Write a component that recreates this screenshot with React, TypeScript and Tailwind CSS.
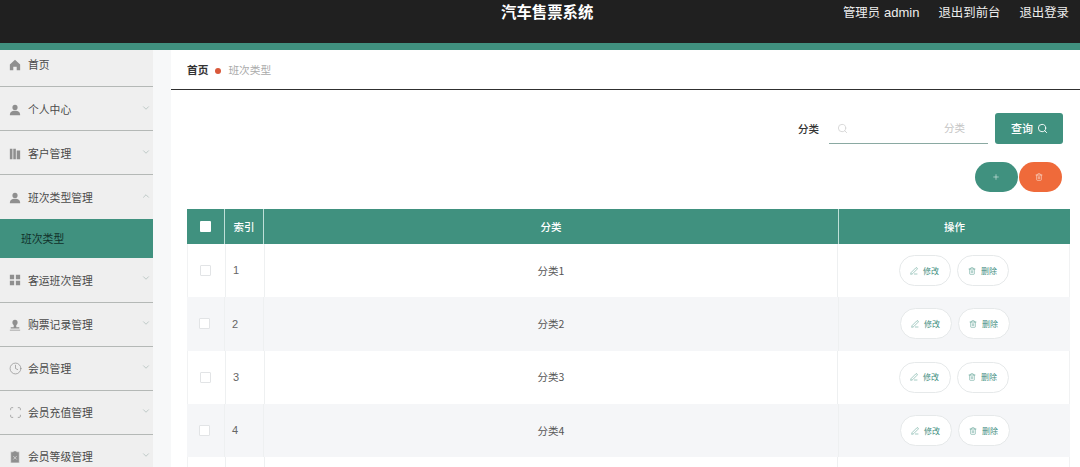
import React from "react";
import { ChevronDown, ChevronUp, Search, Plus, Trash2, Clock, Scan, PenLine } from "lucide-react";

const font = { fontFamily: '"Noto Sans CJK SC","Noto Sans",sans-serif' };

const Home = () => (
  <svg width="12" height="12" viewBox="0 0 14 14" fill="#8f8f8f"><path d="M7 1 1 6.500V13h4V9h4v4h4V6.500z" /></svg>
);
const User = () => (
  <svg width="12" height="12" viewBox="0 0 14 14" fill="#8f8f8f"><circle cx="7" cy="4" r="3" /><path d="M1 13c0-3.500 2.500-5 6-5s6 1.500 6 5z" /></svg>
);
const Bars = () => (
  <svg width="12" height="12" viewBox="0 0 14 14" fill="#8f8f8f"><path d="M1 1h3v12H1zM5 1h3v12H5zM9 3h4v10H9z" /></svg>
);
const Grid = () => (
  <svg width="12" height="12" viewBox="0 0 14 14" fill="#8f8f8f"><path d="M1 1h5v5H1zM8 1h5v5H8zM1 8h5v5H1zM8 8h5v5H8z" /></svg>
);
const Stamp = () => (
  <svg width="12" height="12" viewBox="0 0 14 14" fill="#8f8f8f"><circle cx="7" cy="4" r="3" /><path d="M5.500 6h3v4h-3zM2 9.500h10V11H2zM1 12.500h12v1H1z" /></svg>
);
const Clip = () => (
  <svg width="12" height="13" viewBox="0 0 14 15" fill="#8f8f8f"><path d="M2 2h3V1h4v1h3v13H2zM5 7l4 4M9 7l-4 4" stroke="#e8e8e8" strokeWidth="0.8" /></svg>
);

function MenuRow({ icon, label, chevron = "down", h = "h-[44px]", pad = "pt-[2px]" }: { icon: React.ReactNode; label: string; chevron?: "down" | "up" | "none"; h?: string; pad?: string }) {
  return (
    <div className={`flex items-center ${h} ${pad} pl-[8px] pr-[1px] border-b border-[#b4b8b6]`}>
      <span className="w-[14px] h-[14px] flex items-center justify-center mr-[6px]">{icon}</span>
      <span className="text-[10.800px] text-[#4a4a4a] leading-none flex-1">{label}</span>
      {chevron === "down" && <ChevronDown size={10} color="#b4c2bf" className="mr-[1px] mb-[4px]" />}
      {chevron === "up" && <ChevronUp size={10} color="#b4c2bf" className="mr-[1px] mb-[4px]" />}
    </div>
  );
}

function Row({ n, shaded }: { n: number; shaded: boolean }) {
  return (
    <div className={`flex h-[53.300px] ${shaded ? "bg-[#f5f6f8]" : "bg-white border-x border-[#f1f2f3]"}`}>
      <div className="w-[38px] shrink-0 flex items-center justify-center border-r border-[#eef0f1]">
        <span className="w-[11px] h-[11px] border border-[#e2e4e6] bg-white rounded-[1px] mr-[3px]" />
      </div>
      <div className="w-[39px] shrink-0 flex items-center pl-[7px] text-[11px] text-[#666] border-r border-[#eef0f1]" style={{ fontFamily: '"Liberation Sans",sans-serif' }}>{n}</div>
      <div className="flex-1 flex items-center justify-center text-[10.500px] text-[#555] border-r border-[#eef0f1]">分类{n}</div>
      <div className="w-[231px] shrink-0 flex items-center justify-center gap-[6px]">
        <button className="w-[52px] h-[31px] rounded-full border border-[#e6e9ea] bg-white flex items-center justify-center gap-[5px] text-[8px] text-[#3f8f7f]">
          <PenLine size={8} strokeWidth={1.4} />修改
        </button>
        <button className="w-[52px] h-[31px] rounded-full border border-[#e6e9ea] bg-white flex items-center justify-center gap-[5px] text-[8px] text-[#3f8f7f]">
          <Trash2 size={8} strokeWidth={1.4} />删除
        </button>
      </div>
    </div>
  );
}

export default function App() {
  return (
    <div className="w-[1080px] h-[467px] overflow-hidden bg-white flex flex-col" style={font}>
      <header className="h-[43px] shrink-0 bg-[#202020] flex items-start relative text-white">
        <div className="flex-1 flex justify-end pt-[2px] pr-[11px] text-[12.400px] leading-[20px] gap-[19px] text-[#eeeeee]">
          <span>管理员<span className="ml-[4px] text-[13px]" style={{ fontFamily: '"Liberation Sans",sans-serif' }}>admin</span></span>
          <span>退出到前台</span>
          <span>退出登录</span>
        </div>
        <div className="absolute left-[501px] top-[-1px] text-[15.400px] font-bold leading-[24px]">汽车售票系统</div>
      </header>
      <div className="h-[7px] shrink-0 bg-[#40917f]" />
      <div className="flex flex-1 min-h-0">
        <aside className="w-[152.500px] shrink-0 bg-[#efefef]">
          <MenuRow icon={<Home />} label="首页" chevron="none" h="h-[37px]" pad="pb-[7px]" />
          <MenuRow icon={<User />} label="个人中心" />
          <MenuRow icon={<Bars />} label="客户管理" />
          <div className="flex items-center h-[44px] pt-[1px] pl-[8px] pr-[1px]">
            <span className="w-[14px] h-[14px] flex items-center justify-center mr-[6px]"><User /></span>
            <span className="text-[10.800px] text-[#4a4a4a] leading-none flex-1">班次类型管理</span>
            <ChevronUp size={10} color="#b4c2bf" className="mr-[1px] mb-[4px]" />
          </div>
          <div className="h-[39px] bg-[#40917f] flex items-center pl-[21px] pb-[1px] text-[10.800px] text-[#10302a]">班次类型</div>
          <MenuRow icon={<Grid />} label="客运班次管理" h="h-[45px]" pad="pt-0" />
          <MenuRow icon={<Stamp />} label="购票记录管理" pad="pt-0" />
          <MenuRow icon={<Clock size={13} color="#8f8f8f" strokeWidth={1.3} />} label="会员管理" pad="pt-0" />
          <MenuRow icon={<Scan size={13} color="#8f8f8f" strokeWidth={1.3} />} label="会员充值管理" pad="pt-0" />
          <MenuRow icon={<Clip />} label="会员等级管理" pad="pt-0" />
        </aside>
        <div className="w-[18.500px] shrink-0 bg-[#f7f8f9]" />
        <main className="flex-1 min-w-0 bg-white">
          <div className="h-[40px] border-b border-[#303030] flex items-center pl-[16px] text-[10.700px] pt-[1px]">
            <span className="font-bold text-[#333]">首页</span>
            <span className="w-[6px] h-[6px] rounded-full bg-[#d9583a] mx-[7px] mt-[2px]" />
            <span className="text-[#aaaaaa]">班次类型</span>
          </div>
          <div className="pl-[16px] pr-[10px] pt-[23px]">
            <div className="flex items-center justify-end pr-[7px] h-[31px]">
              <span className="text-[10.500px] font-medium text-[#333] mr-[10px]">分类</span>
              <div className="w-[159px] h-[31px] border-b border-[#8aa9a2] flex items-center pl-[8px] pr-[23px] justify-between">
                <Search size={11} color="#d5d5d5" />
                <span className="text-[10.500px] text-[#c4c4c4]">分类</span>
              </div>
              <button className="ml-[7px] w-[68px] h-[31px] rounded-[3px] bg-[#40917f] text-white text-[11px] font-medium flex items-center justify-center gap-[4px] pl-[1px]">
                查询<Search size={11} />
              </button>
            </div>
            <div className="flex justify-end gap-[1px] pr-[8px] mt-[18px] h-[30px]">
              <button className="w-[43px] h-[30px] rounded-full bg-[#40917f] flex items-center justify-center text-[#cfe5df] pr-[1px]"><Plus size={8} /></button>
              <button className="w-[43px] h-[30px] rounded-full bg-[#ef6a3a] flex items-center justify-center text-[#f9d9cb] pr-[4px]"><Trash2 size={8} /></button>
            </div>
            <div className="mt-[17px]">
              <div className="flex h-[35px] bg-[#40917f] text-white text-[10.500px] font-medium">
                <div className="w-[38px] shrink-0 flex items-center justify-center border-r border-[#bfe0d8]">
                  <span className="w-[11px] h-[11px] bg-white rounded-[1px]" />
                </div>
                <div className="w-[39px] shrink-0 flex items-center justify-center border-r border-[#bfe0d8]">索引</div>
                <div className="flex-1 flex items-center justify-center border-r border-[#bfe0d8]">分类</div>
                <div className="w-[231px] shrink-0 flex items-center justify-center">操作</div>
              </div>
              {[1, 2, 3, 4].map((n) => <Row key={n} n={n} shaded={n % 2 === 0} />)}
              <div className="bg-white border-x border-[#f1f2f3] h-[20px] flex">
                <div className="w-[38px] border-r border-[#eef0f1]" />
                <div className="w-[39px] border-r border-[#eef0f1]" />
                <div className="flex-1 border-r border-[#eef0f1]" />
                <div className="w-[231px]" />
              </div>
            </div>
          </div>
        </main>
      </div>
    </div>
  );
}
